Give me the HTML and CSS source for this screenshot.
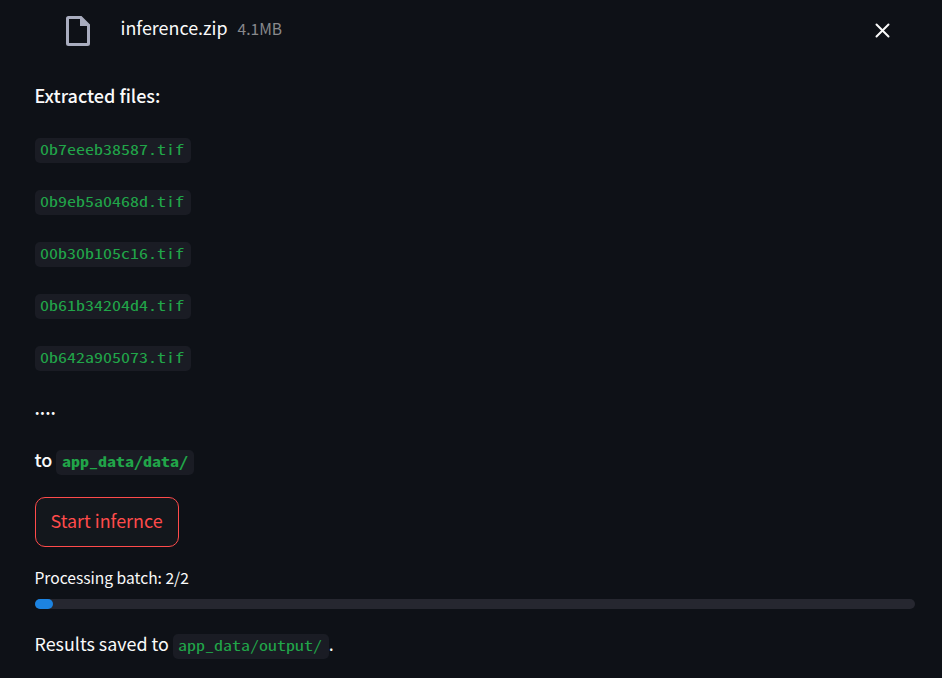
FILE: index.html
```html
<!DOCTYPE html>
<html lang="en">
<head>
<meta charset="utf-8">
<title>Inference</title>
<link rel="stylesheet" href="styles.css">
</head>
<body>
<main class="app">
  <div class="upload">
    <svg class="file-icon" viewBox="0 0 24 30" width="24" height="30"><path fill="#a9adbf" fill-rule="evenodd" d="M2.5 0H15.5L24 8.5V27.5Q24 30 21.5 30H2.5Q0 30 0 27.5V2.5Q0 0 2.5 0ZM3 3V27H21V10H14V3Z"/></svg>
    <span class="file-name">inference.zip</span>
    <span class="file-size">4.1MB</span>
    <button class="close" aria-label="Remove file"><svg viewBox="0 0 15 15" width="15" height="15"><path d="M1.5 1.5L13.5 13.5M13.5 1.5L1.5 13.5" fill="none" stroke="#fafafa" stroke-width="2" stroke-linecap="round"/></svg></button>
  </div>
  <p class="line strong">Extracted files:</p>
  <p class="line"><code class="file"><span>0b7eeeb38587.tif</span></code></p>
  <p class="line"><code class="file"><span>0b9eb5a0468d.tif</span></code></p>
  <p class="line"><code class="file"><span>00b30b105c16.tif</span></code></p>
  <p class="line"><code class="file"><span>0b61b34204d4.tif</span></code></p>
  <p class="line"><code class="file"><span>0b642a905073.tif</span></code></p>
  <p class="line strong">....</p>
  <p class="line strong last">to <code class="data"><span>app_data/data/</span></code></p>
  <button class="start">Start infernce</button>
  <div class="progress-label">Processing batch: 2/2</div>
  <div class="track"><div class="bar"></div></div>
  <p class="line result">Results saved to <code class="file"><span>app_data/output/</span></code>.</p>
</main>
</body>
</html>
```
FILE: styles.css
```css
* { box-sizing: border-box; }
body {
  margin: 0;
  background: #0e1117;
  color: #fafafa;
  font-family: "Noto Sans CJK SC", "Noto Sans", sans-serif;
  font-size: 17.9px;
}
.app {
  display: flex;
  flex-direction: column;
  align-items: flex-start;
  height: 678px;
  padding: 0 27px 0 34.5px;
  overflow: hidden;
}
.app > * { flex-shrink: 0; }
.upload {
  display: flex;
  align-items: center;
  width: 100%;
  height: 62px;
  padding: 0 25px 0 31.5px;
}
.file-icon { margin-right: 30.5px; }
.file-name { margin: 0 10px 8px 0; line-height: 30px; }
.file-size { margin-bottom: 6px; font-size: 15.6px; line-height: 30px; color: #88898c; }
.close { display: flex; margin: 0 0 1px auto; padding: 0; border: 0; background: none; }
.line {
  display: flex;
  align-items: flex-start;
  height: 30px;
  margin: 0 0 22px;
  line-height: 27px;
  white-space: pre;
}
.upload + .line { margin-top: 20px; }
.strong { font-size: 18px; font-weight: 500; }
code {
  height: 25px;
  margin-top: 4px;
  padding: 0 5.5px;
  border-radius: 5px;
  background: #1a1c24;
  color: #21a549;
  font-family: "Noto Sans Mono CJK SC", "DejaVu Sans Mono", monospace;
  font-size: 14px;
  line-height: 23px;
}
/* Widened monospace: 9px per character. */
code span {
  display: block;
  transform: scaleX(1.2857);
  transform-origin: 0 50%;
}
.file { width: 156px; }
.data { width: 138px; padding-left: 6px; font-weight: 700; }
.line.last { margin-bottom: 21px; }
.start {
  width: 144px;
  height: 50px;
  padding: 0 0 4px;
  border: 1px solid #ff4b4b;
  border-radius: 10px;
  background: #13171c;
  color: #ff4b4b;
  font-family: inherit;
  font-size: 17.9px;
  line-height: 44px;
}
.progress-label { height: 26px; margin-top: 18px; font-size: 15.6px; line-height: 24px; }
.track { width: 880px; height: 10px; margin-top: 8px; border-radius: 5px; background: #262730; }
.bar { width: 18px; height: 10px; border-radius: 5px; background: #1c83e1; }
.line.result { margin-top: 21px; }
```
